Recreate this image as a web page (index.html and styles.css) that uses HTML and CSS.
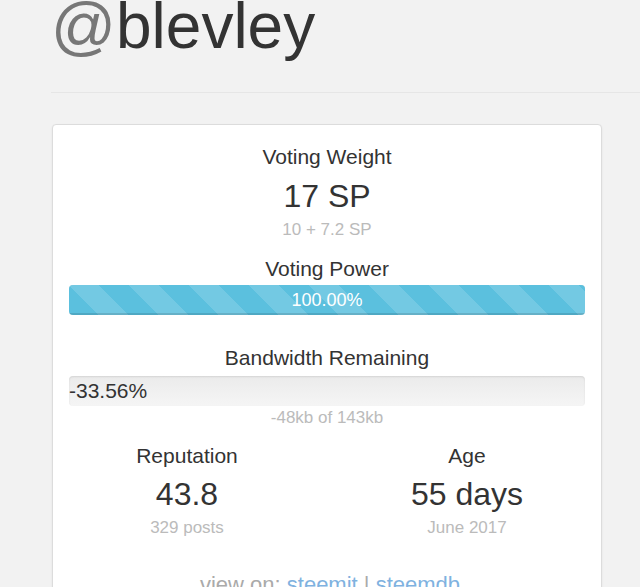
FILE: index.html
```html
<!DOCTYPE html>
<html>
<head>
<meta charset="utf-8">
<link rel="stylesheet" href="styles.css">
</head>
<body>
<div class="container">
  <div class="page-header">
    <h1 class="title"><span class="at">@</span>blevley</h1>
  </div>
  <div class="card">
    <h4 class="label">Voting Weight</h4>
    <div class="big">17 SP</div>
    <div class="sub">10 + 7.2 SP</div>
    <h4 class="label label-vp">Voting Power</h4>
    <div class="progress">
      <div class="bar bar-info" style="width:100%">100.00%</div>
    </div>
    <h4 class="label label-bw">Bandwidth Remaining</h4>
    <div class="progress progress-plain">
      <span class="bar-text">-33.56%</span>
    </div>
    <div class="sub sub-bw">-48kb of 143kb</div>
    <div class="stats">
      <div class="stat">
        <h4 class="label">Reputation</h4>
        <div class="big big-stat">43.8</div>
        <div class="sub sub-stat">329 posts</div>
      </div>
      <div class="stat">
        <h4 class="label">Age</h4>
        <div class="big big-stat">55 days</div>
        <div class="sub sub-stat">June 2017</div>
      </div>
    </div>
    <div class="viewon">view on: <a href="#">steemit</a> | <a href="#">steemdb</a></div>
  </div>
</div>
</body>
</html>
```

FILE: styles.css
```css
html, body {
  margin: 0;
  padding: 0;
  background: #f2f2f2;
  font-family: "Liberation Sans", Arial, Helvetica, sans-serif;
  color: #333;
  overflow: hidden;
}
.container {
  padding-left: 51px;
}
.page-header {
  border-bottom: 1px solid #e6e6e6;
  padding-bottom: 34px;
  margin-right: -20px;
}
.title {
  margin: -5px 0 0 0;
  font-size: 64px;
  line-height: 63px;
  font-weight: normal;
  color: #333;
}
.at {
  color: #777;
}
.card {
  margin-top: 31px;
  width: 516px;
  background: #fff;
  border: 1px solid #dcdcdc;
  border-radius: 4px;
  box-shadow: 0 1px 2px rgba(0,0,0,0.08);
  padding: 17px 16px 20px 16px;
  text-align: center;
  position: relative;
  left: 1px;
}
.label {
  margin: 0;
  font-size: 21px;
  line-height: 30px;
  font-weight: normal;
  color: #333;
}
.big {
  margin-top: 6px;
  font-size: 32px;
  line-height: 36px;
  color: #333;
}
.sub {
  margin-top: 6px;
  font-size: 17px;
  line-height: 20px;
  color: #bbb;
}
.label-vp {
  margin-top: 14px;
}
.progress {
  margin-top: 1px;
  height: 30px;
  border-radius: 4px;
  overflow: hidden;
  background: linear-gradient(to bottom, #ebebeb, #f5f5f5);
  box-shadow: inset 0 1px 2px rgba(0,0,0,0.1);
  text-align: left;
}
.bar {
  height: 100%;
  line-height: 30px;
  font-size: 18px;
  color: #fff;
  text-align: center;
  box-sizing: border-box;
}
.bar-info {
  background-color: #5bc0de;
  background-image: linear-gradient(45deg, rgba(255,255,255,0.15) 25%, transparent 25%, transparent 50%, rgba(255,255,255,0.15) 50%, rgba(255,255,255,0.15) 75%, transparent 75%, transparent);
  background-size: 60px 60px;
  box-shadow: inset 0 -2px 0 rgba(0,0,0,0.12);
}
.label-bw {
  margin-top: 28px;
}
.progress-plain {
  margin-top: 3px;
}
.bar-text {
  display: block;
  font-size: 21px;
  line-height: 30px;
  color: #333;
}
.sub-bw {
  margin-top: 2px;
}
.stats {
  display: flex;
  justify-content: center;
  gap: 80px;
  margin-top: 13px;
}
.stat {
  width: 200px;
}
.big-stat {
  margin-top: 5px;
}
.sub-stat {
  margin-top: 6px;
}
.viewon {
  margin-top: 32px;
  padding-left: 6px;
  font-size: 22px;
  line-height: 30px;
  color: #aaa;
}
.viewon a {
  color: #7fb2e0;
  text-decoration: underline;
}
```
